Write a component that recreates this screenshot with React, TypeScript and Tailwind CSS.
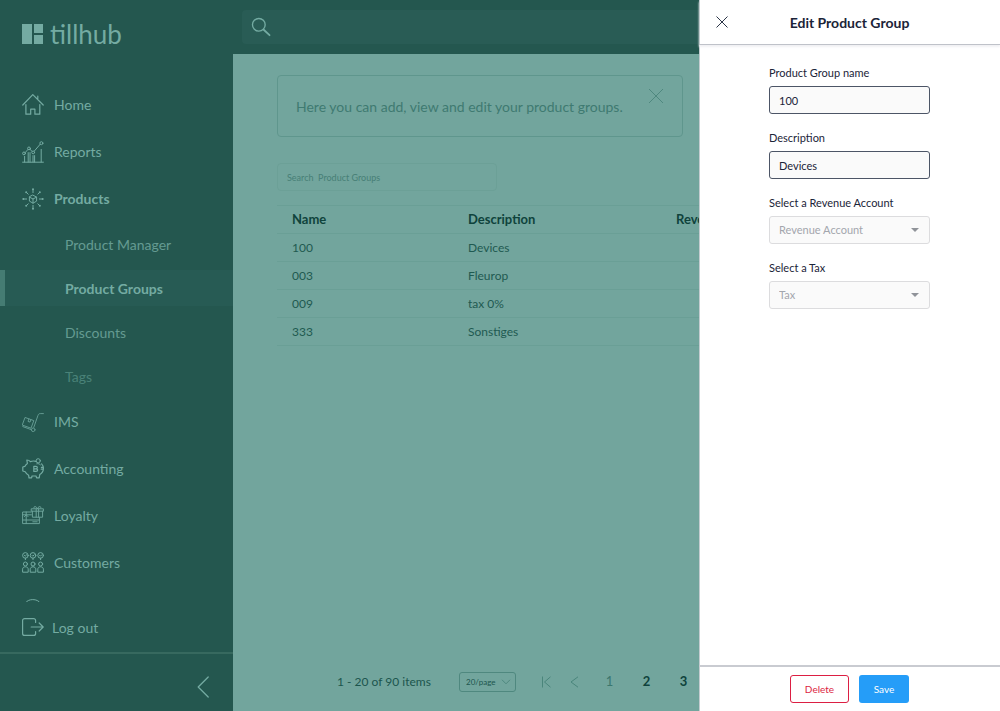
import type { ReactNode } from "react";

type IconProps = { children: ReactNode; className?: string };

function Icon({ children, className = "size-[22px]" }: IconProps) {
  return (
    <svg
      viewBox="0 0 22 22"
      fill="none"
      stroke="currentColor"
      strokeWidth="1"
      strokeLinecap="round"
      strokeLinejoin="round"
      aria-hidden="true"
      className={`shrink-0 ${className}`}
    >
      {children}
    </svg>
  );
}

const homeIcon = (
  <Icon>
    <path d="M.8 11 10.8.6l10.4 10.400M3.900 10.600v9.600h4.800v-5h4.200v5h4.900v-9.600M15.800 4.600V2.200" strokeWidth="1.200" />
  </Icon>
);

const reportsIcon = (
  <Icon>
    <path d="M.6 21.2h20.8M2.6 21v-5.6M6.2 21v-9.4M8 21v-9.4M11 21v-6.4M12.6 21v-6.4M19.2 21V8.4M3.2 11.6l2.6-3M8.2 8.4l1.8 2M12.2 10.2l6-7" />
    <circle cx="2" cy="12.4" r="1.4" />
    <circle cx="7" cy="7.4" r="1.4" />
    <circle cx="11.2" cy="11.4" r="1.4" />
    <circle cx="19.4" cy="2.2" r="1.5" />
  </Icon>
);

const productsIcon = (
  <Icon>
    <path d="m11 7.2 3.6 1.9v4L11 15.2l-3.6-2.1v-4zM7.4 9.1 11 11l3.6-1.9M11 11v4.2" />
    <path d="M11 4.6V1.4M11 17.4v3.2M4.6 11H1.4M17.4 11h3.2M6.2 6.2 4.4 4.4M15.8 6.2l1.8-1.8M6.2 15.8l-1.8 1.8M15.8 15.8l1.8 1.8" />
    <g fill="currentColor" stroke="none">
      <circle cx="11" cy="1.3" r="1" />
      <circle cx="11" cy="20.7" r="1" />
      <circle cx="1.3" cy="11" r="1" />
      <circle cx="20.7" cy="11" r="1" />
      <circle cx="4.2" cy="4.2" r="1" />
      <circle cx="17.8" cy="4.2" r="1" />
      <circle cx="4.2" cy="17.8" r="1" />
      <circle cx="17.8" cy="17.8" r="1" />
    </g>
  </Icon>
);

const imsIcon = (
  <Icon className="size-[22px] opacity-80">
    <path d="M21.400 2.600h-3.200c-1.200 0-1.800.6-2.200 1.800l-4.200 12M.8 15.600l8.800 3.200M3.400 6.600l8.400 3-2.800 7.600-8.400-3zM6.800 8l-.8 2.400 2 .7.9-2.400" />
    <circle cx="11.2" cy="18.8" r="1.800" />
  </Icon>
);

const accountingIcon = (
  <Icon>
    <path d="M14 3.400c-2-.6-4-.4-5.600.2C7.200 2.200 6 2 4.800 2l.6 3.400C4 6.400 3.200 7.600 2.800 8.400L.8 9v4l2.400.8c.8 1.600 2 2.600 3.400 3.400l.4 2.600h2.600l.4-1.800h4l.6 1.800h2.600l.6-3.400c2.600-1.600 3.600-3.800 3.600-6 0-1.800-.6-3.400-1.800-4.600M19.400 9.400h2M19.200 11.200h2" strokeWidth="1.200" />
    <circle cx="16.200" cy="2.800" r="2.100" />
    <path d="M14.800 5.800c1.400-.4 2.600 0 3.600 1" />
    <path d="M11.800 8.400h2.200c1.800 0 1.800 2.400 0 2.400 2.200 0 2.200 2.600 0 2.600h-2.200zM11.800 10.800H14" strokeWidth="1.200" />
  </Icon>
);

const loyaltyIcon = (
  <Icon className="size-[22px] opacity-90">
    <path d="M9.200 7H.6v11.600h16.800v-6M.6 9.800h8.800M.6 15h16.800M4.200 7v11.600M2.400 11.600l1.800-1.800L6 11.600" />
    <path d="M10.400 6.200v6h10.200v-6M9.600 3.800h11.800v2.400H9.600zM14.200 3.800v8.400M16.600 3.800v8.400M15.400 3.600c-1-2.800-4.200-2.600-3.400-.6M15.400 3.600c1-2.800 4.200-2.600 3.400-.6M10.800 16.800h4.400" />
  </Icon>
);

const customersIcon = (
  <Icon>
    {[3.4, 11, 18.6].map((cx) => (
      <g key={cx}>
        <circle cx={cx} cy="3.400" r="2.800" />
        <path d={`M${cx - 1} 3.400l.8.8 1.400-1.400M${cx} 6.200v1.400`} />
        <circle cx={cx} cy="12" r="2" />
        <path d={`M${cx - 2.8} 19.800v-2.600c0-1.400 1.200-2.400 2.800-2.400s2.800 1 2.800 2.400v2.600z`} />
      </g>
    ))}
  </Icon>
);

const partialIcon = (
  <Icon>
    <path d="M2.800 4.600C4.800 1.600 7.600.6 10.800.6s6 1 8 4M4.400 3.800h2.200M15 3.800h2.200M9.600 3.800h2.800" />
  </Icon>
);

const groups = [
  { id: "100", description: "Devices" },
  { id: "003", description: "Fleurop" },
  { id: "009", description: "tax 0%" },
  { id: "333", description: "Sonstiges" },
];

function NavItem({ icon, label, bold }: { icon: ReactNode; label: string; bold?: boolean }) {
  return (
    <li className="h-[47px] shrink-0">
      <a href="#" className={`flex h-full items-center gap-[10px] pl-[22px] ${bold ? "font-bold" : ""}`}>
        {icon}
        {label}
      </a>
    </li>
  );
}

function SubItem({ label, tone, active }: { label: string; tone: string; active?: boolean }) {
  return (
    <li className="flex h-11 shrink-0 items-center">
      <a
        href="#"
        aria-current={active ? "page" : undefined}
        className={`flex h-9 w-full items-center border-l-[5px] pl-[60px] ${
          active ? "border-[#457c73] bg-[#275b54] font-bold" : "border-transparent"
        } ${tone}`}
      >
        {label}
      </a>
    </li>
  );
}

function Sidebar() {
  return (
    <nav className="flex w-[233px] shrink-0 flex-col bg-[#24574f] text-[14px] text-[#74aba2]">
      <a href="#" className="flex h-[81px] shrink-0 items-start gap-[6px] pt-[14px] pl-[22px]">
        <svg viewBox="0 0 22 22" className="mt-[9px] size-[22px]" fill="currentColor" aria-hidden="true">
          <path d="M0 1h10v20H0zM12 1h9v9h-9zM12 12h9v9h-9z" />
        </svg>
        <span className="text-[26px] leading-10">tillhub</span>
      </a>
      <ul className="flex h-0 grow flex-col overflow-hidden">
        <NavItem icon={homeIcon} label="Home" />
        <NavItem icon={reportsIcon} label="Reports" />
        <NavItem icon={productsIcon} label="Products" bold />
        <SubItem label="Product Manager" tone="text-[#659b92]" />
        <SubItem label="Product Groups" tone="text-[#74aba2]" active />
        <SubItem label="Discounts" tone="text-[#659b92]" />
        <SubItem label="Tags" tone="text-[#4a8278]" />
        <NavItem icon={imsIcon} label="IMS" />
        <NavItem icon={accountingIcon} label="Accounting" />
        <NavItem icon={loyaltyIcon} label="Loyalty" />
        <NavItem icon={customersIcon} label="Customers" />
        <li className="h-[47px] shrink-0">
          <a href="#" aria-label="More" className="flex h-full items-center pl-[22px]">
            {partialIcon}
          </a>
        </li>
      </ul>
      <a href="#" className="flex h-[52px] shrink-0 items-center gap-2 border-b-2 border-[#37695f] pl-[22px]">
        <Icon>
          <path d="M13.600 6.400V4.600a2 2 0 0 0-2-2h-9a2 2 0 0 0-2 2v12.800a2 2 0 0 0 2 2h9a2 2 0 0 0 2-2v-1.800M9.200 11h12M17.200 7l4 4-4 4" strokeWidth="1.200" />
        </Icon>
        Log out
      </a>
      <div className="flex h-[57px] shrink-0 items-center justify-end pt-2 pr-[19px]">
        <button type="button" aria-label="Collapse menu">
          <Icon>
            <path d="M16.200 1 6.200 11l10 10" strokeWidth="1.300" />
          </Icon>
        </button>
      </div>
    </nav>
  );
}

function Pagination() {
  return (
    <footer className="mt-auto flex h-[58px] shrink-0 items-center pl-[104px] text-[12px] whitespace-nowrap text-[#1c554d]">
      <span className="w-[122px] shrink-0">1 - 20 of 90 items</span>
      <div className="grid w-[57px] shrink-0 items-center">
        <select
          aria-label="Items per page"
          className="h-5 appearance-none rounded-[3px] border border-[#4f887f] pl-[6px] text-[8px] [grid-area:1/1]"
        >
          <option>20/page</option>
        </select>
        <svg viewBox="0 0 10 6" className="pointer-events-none mr-[5px] h-[6px] w-[10px] justify-self-end stroke-[#4f887f] [grid-area:1/1]" fill="none">
          <path d="m1 .8 4 4 4-4" />
        </svg>
      </div>
      <div className="ml-[17px] flex shrink-0 items-center text-[13px] text-[#3c776e]">
        <button type="button" aria-label="First page" className="grid w-7 place-items-center">
          <svg viewBox="0 0 12 12" className="size-3 stroke-[#4a857b]" fill="none">
            <path d="M1.500 .5v11M9.500 .8 3.500 6l6 5.200" />
          </svg>
        </button>
        <button type="button" aria-label="Previous page" className="mr-[2px] grid w-7 place-items-center">
          <svg viewBox="0 0 12 12" className="size-3 stroke-[#4a857b]" fill="none">
            <path d="M9 .8 2 6l7 5.200" />
          </svg>
        </button>
        <button type="button" className="w-[37px] text-center">1</button>
        <button type="button" className="w-[37px] text-center font-bold text-[#0f433c]">2</button>
        <button type="button" className="w-[37px] text-center font-bold text-[#0f433c]">3</button>
      </div>
    </footer>
  );
}

function Content() {
  return (
    <div className="flex min-w-0 grow flex-col overflow-hidden bg-[#72a59d]">
      <header className="h-[54px] shrink-0 bg-[#24574f] pt-[10px] pl-[9px]">
        <label className="flex h-[34px] items-center rounded-l bg-[#295c55] pl-[9px] text-[#74aba2]">
          <Icon className="size-5">
            <circle cx="8.600" cy="8.600" r="7" strokeWidth="1.500" />
            <path d="m14 14 6.400 6" strokeWidth="2" />
          </Icon>
          <input type="search" aria-label="Search" className="h-full min-w-0 grow px-3 text-sm outline-none" />
        </label>
      </header>
      <main className="flex grow flex-col items-start pl-[44px]">
        <section className="mt-[21px] mr-4 flex h-[62px] items-start justify-between self-stretch rounded border border-[#5f968d] pr-[18px] pl-[18px] text-[#3f7a71]">
          <p className="self-center text-[14px] whitespace-nowrap">Here you can add, view and edit your product groups.</p>
          <button type="button" aria-label="Dismiss" className="mt-3">
            <svg viewBox="0 0 16 16" className="size-4 stroke-[#4f887f]" fill="none">
              <path d="m1 1 14 14M15 1 1 15" />
            </svg>
          </button>
        </section>
        <input
          type="text"
          aria-label="Search product groups"
          placeholder="Search  Product Groups"
          className="mt-[26px] h-7 w-[220px] rounded border border-[#6ca097] px-[9px] text-[9px] placeholder:text-[#477f76]"
        />
        <table className="mt-[14px] w-[800px] table-fixed border-collapse text-left text-[12px] text-[#1f5a51]">
          <thead>
            <tr className="h-7 border-y border-[#6a9f96] text-[13px] text-[#0f433c]">
              <th className="w-[176px] pl-[15px]">Name</th>
              <th className="w-[208px] pl-[15px]">Description</th>
              <th className="pl-[15px]">Revenue Account</th>
            </tr>
          </thead>
          <tbody>
            {groups.map((group) => (
              <tr key={group.id} className="h-7 border-b border-[#6a9f96]">
                <td className="pl-[15px]">{group.id}</td>
                <td className="pl-[15px]">{group.description}</td>
                <td />
              </tr>
            ))}
          </tbody>
        </table>
      </main>
      <Pagination />
    </div>
  );
}

function TextField({ id, label, value }: { id: string; label: string; value: string }) {
  return (
    <div className="flex flex-col gap-1">
      <label htmlFor={id} className="leading-[18px]">{label}</label>
      <input
        id={id}
        type="text"
        defaultValue={value}
        className="h-7 w-full rounded-[3px] border border-[#4c5566] bg-[#fafafa] px-[9px]"
      />
    </div>
  );
}

function SelectField({ id, label, placeholder }: { id: string; label: string; placeholder: string }) {
  return (
    <div className="flex flex-col gap-1">
      <label htmlFor={id} className="leading-[18px]">{label}</label>
      <div className="grid items-center">
        <select
          id={id}
          className="h-7 w-full appearance-none rounded-[3px] border border-[#dcdcde] bg-[#fafafa] px-[9px] text-[#a3a6ad] [grid-area:1/1]"
        >
          <option>{placeholder}</option>
        </select>
        <svg viewBox="0 0 8 4" className="pointer-events-none mr-[11px] h-1 w-2 justify-self-end fill-[#909399] [grid-area:1/1]">
          <path d="M0 0h8L4 4z" />
        </svg>
      </div>
    </div>
  );
}

function Drawer() {
  return (
    <aside className="flex w-[301px] shrink-0 flex-col bg-white text-[11px] text-[#1b2438] shadow-[inset_1px_0_0_#c3ccd0]">
      <header className="grid h-[45px] shrink-0 grid-cols-[45px_1fr_45px] items-center border-b border-[#bfc2c9] shadow-[0_2px_2px_#f1f1f4]">
        <button type="button" aria-label="Close" className="justify-self-center">
          <svg viewBox="0 0 12 12" className="size-3 stroke-[#2b3547]" fill="none">
            <path d="m.5.5 11 11M11.500.5l-11 11" />
          </svg>
        </button>
        <h1 className="text-center text-[14px] font-bold">Edit Product Group</h1>
      </header>
      <form className="mx-[70px] mt-[19px] flex flex-col gap-[15px]">
        <TextField id="group-name" label="Product Group name" value="100" />
        <TextField id="description" label="Description" value="Devices" />
        <SelectField id="revenue-account" label="Select a Revenue Account" placeholder="Revenue Account" />
        <SelectField id="tax" label="Select a Tax" placeholder="Tax" />
      </form>
      <footer className="mt-auto flex h-[46px] shrink-0 items-center justify-center gap-[10px] border-t-2 border-[#c9cbd1] text-[10px]">
        <button type="button" className="h-7 w-[59px] rounded-[3px] border border-[#dc1f43] text-[#dc1f43]">Delete</button>
        <button type="button" className="h-7 w-[50px] rounded-[3px] bg-[#259df8] text-white">Save</button>
      </footer>
    </aside>
  );
}

export default function App() {
  return (
    <div className="flex h-screen overflow-hidden font-[Lato,sans-serif]">
      <Sidebar />
      <Content />
      <Drawer />
    </div>
  );
}
